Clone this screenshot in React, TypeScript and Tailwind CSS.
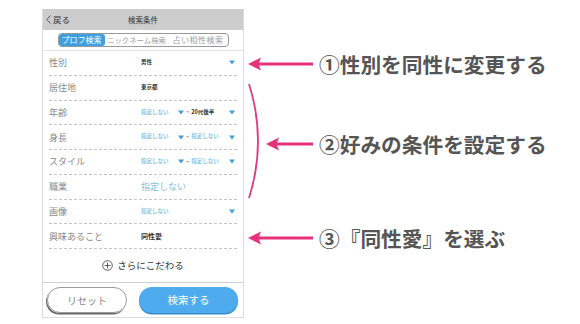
import React from "react";

const jp = { fontFamily: '"Noto Sans CJK JP", "Noto Sans", sans-serif' };

const Tri = () => (
  <svg width="6" height="5" viewBox="0 0 6 5" className="shrink-0">
    <path d="M0 0.5 L6 0.5 L3 4.5 Z" fill="#3f9fdc" />
  </svg>
);

const Arrow = ({ width }: { width: number }) => (
  <svg width={width} height="14" viewBox={`0 0 ${width} 14`} className="shrink-0">
    <path d={`M0 7 L13 0.5 L11 5.5 L${width} 5.5 L${width} 8.5 L11 8.5 L13 13.5 Z`} fill="#e8317b" />
  </svg>
);

const Note = ({ children }: { children: React.ReactNode }) => (
  <span className="text-[20.7px] font-bold leading-none text-[#555] whitespace-nowrap">{children}</span>
);

const Row = ({ label, children }: { label: string; children?: React.ReactNode }) => (
  <div className="flex h-[24.75px] items-center border-b border-dashed border-[#c4c4c4]">
    <span className="w-[92px] shrink-0 text-[9px] leading-none text-[#8a8a8a]">{label}</span>
    <div className="flex flex-1 items-center pr-[2px] leading-none">{children}</div>
  </div>
);

const Small = ({ children, dark }: { children: React.ReactNode; dark?: boolean }) => (
  <span className={`text-[5.5px] leading-none font-semibold whitespace-nowrap ${dark ? "text-[#333]" : "text-[#8fc6e4]"}`}>{children}</span>
);

const Range = ({ to, dark }: { to: string; dark?: boolean }) => (
  <>
    <span className="flex w-[37px] items-center"><Small>指定しない</Small></span>
    <Tri />
    <span className="mx-[2px] text-[6px] leading-none text-[#555]">~</span>
    <Small dark={dark}>{to}</Small>
    <span className="ml-auto flex items-center"><Tri /></span>
  </>
);

export default function App() {
  return (
    <div className="flex h-[324px] w-[580px] items-start bg-white" style={jp}>
      {/* phone panel */}
      <div className="ml-[42px] mt-[9px] flex h-[309px] w-[202px] shrink-0 flex-col border border-[#dcdcdc] border-t-0">
        <div className="relative flex h-[21px] items-center justify-center bg-[#cdcdcd]">
          <div className="absolute left-[3px] flex items-center gap-[2px]">
            <svg width="5" height="9" viewBox="0 0 5 9">
              <path d="M4.5 0.5 L0.8 4.5 L4.5 8.5" fill="none" stroke="#444" strokeWidth="0.9" />
            </svg>
            <span className="text-[8.5px] text-[#333]">戻る</span>
          </div>
          <span className="text-[7.5px] text-[#333]">検索条件</span>
        </div>
        <div className="flex h-[21px] items-center justify-center border-b border-[#e2e2e2]">
          <div className="flex h-[14px] w-[171px] items-center rounded-[4px] border border-[#9a9a9a] leading-none">
            <span className="flex h-full w-[46px] items-center justify-center rounded-[3px] bg-[#3d9fe0] text-[8px] text-white">プロフ検索</span>
            <span className="w-[64px] text-center text-[7.4px] text-[#a0a0a0]">ニックネーム検索</span>
            <span className="flex-1 text-center text-[8px] tracking-[0.5px] text-[#a0a0a0]">占い相性検索</span>
          </div>
        </div>
        <div className="flex flex-col px-[6px]">
          <Row label="性別">
            <Small dark>男性</Small>
            <span className="ml-auto flex items-center"><Tri /></span>
          </Row>
          <Row label="居住地">
            <Small dark>東京都</Small>
          </Row>
          <Row label="年齢">
            <Range to="20代後半" dark />
          </Row>
          <Row label="身長">
            <Range to="指定しない" />
          </Row>
          <Row label="スタイル">
            <Range to="指定しない" />
          </Row>
          <Row label="職業">
            <span className="text-[9px] text-[#7cbfe0]">指定しない</span>
          </Row>
          <Row label="画像">
            <Small>指定しない</Small>
            <span className="ml-auto flex items-center"><Tri /></span>
          </Row>
          <Row label="興味あること">
            <span className="text-[7px] font-semibold text-[#333]">同性愛</span>
          </Row>
        </div>
        <div className="flex h-[33px] items-center justify-center gap-[4px]">
          <svg width="11" height="11" viewBox="0 0 11 11">
            <circle cx="5.5" cy="5.5" r="4.8" fill="none" stroke="#333" strokeWidth="0.8" />
            <path d="M5.5 2.6 V8.4 M2.6 5.5 H8.4" stroke="#333" strokeWidth="0.8" />
          </svg>
          <span className="text-[9.5px] text-[#333]">さらにこだわる</span>
        </div>
        <div className="flex flex-1 items-start gap-[12px] border-t border-[#cfcfcf] px-[4px] pt-[4px]">
          <button className="flex h-[26px] w-[80px] items-center justify-center rounded-full border border-[#9a9a9a] text-[10px] text-[#888] shadow-[-1px_1.5px_0_#666]">
            リセット
          </button>
          <button className="flex h-[26px] w-[99px] items-center justify-center rounded-full bg-[#4eabed] text-[10.5px] text-white shadow-[0_1.5px_0_#3a8cc6]">
            検索する
          </button>
        </div>
      </div>

      {/* annotations */}
      <div className="flex flex-col pl-[2px]">
        <div className="mt-[52px] flex h-[24px] items-center gap-[6px] pl-[2px]">
          <Arrow width={65} />
          <Note>①性別を同性に変更する</Note>
        </div>
        <div className="mt-[7px] flex h-[116px] items-center">
          <svg width="20" height="116" viewBox="0 0 20 116" className="shrink-0">
            <path d="M3 1 Q21 58 3 115" fill="none" stroke="#e03a80" strokeWidth="1.8" />
          </svg>
          <div className="mt-[6px] flex items-center gap-[6px]">
            <Arrow width={47} />
            <Note>②好みの条件を設定する</Note>
          </div>
        </div>
        <div className="mt-[27px] flex h-[24px] items-center gap-[6px] pl-[2px]">
          <Arrow width={65} />
          <Note>③『同性愛』を選ぶ</Note>
        </div>
      </div>
    </div>
  );
}
